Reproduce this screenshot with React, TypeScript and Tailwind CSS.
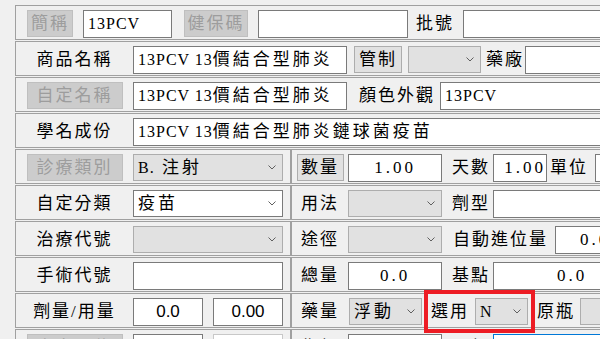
import type { ReactNode } from 'react'

// ─── Small form pieces ────────────────────────────────────────────────────────

function Chevron() {
  return (
    <svg width="8" height="5" viewBox="0 0 8 5" className="shrink-0">
      <path d="M0.5 0.5 L4 4 L7.5 0.5" fill="none" stroke="#5f5f5f" strokeWidth="1" />
    </svg>
  )
}

function Row({ children }: { children: ReactNode }) {
  return (
    <div className="flex items-center h-[35px] mb-px pt-[2px] border border-[#a0a0a0]">
      {children}
    </div>
  )
}

function Label({ children, className = '' }: { children: ReactNode; className?: string }) {
  return (
    <div className={`shrink-0 text-center text-[17px] tracking-[2px] leading-none whitespace-nowrap ${className}`}>
      {children}
    </div>
  )
}

function Btn({ children, disabled, className = '' }: { children: ReactNode; disabled?: boolean; className?: string }) {
  return (
    <div
      className={`shrink-0 h-[27px] flex items-center justify-center text-[17px] tracking-[2px] leading-none whitespace-nowrap border ${
        disabled ? 'bg-[#cccccc] border-[#bfbfbf] text-[#9d9d9d]' : 'bg-[#e1e1e1] border-[#adadad] text-black'
      } ${className}`}
    >
      {children}
    </div>
  )
}

function Input({ children, className = '' }: { children?: ReactNode; className?: string }) {
  return (
    <div
      className={`shrink-0 h-[28px] flex items-center overflow-hidden whitespace-nowrap bg-white border border-[#7a7a7a] text-[17px] tracking-[3px] leading-none ${className}`}
    >
      {children}
    </div>
  )
}

function Select({ children, white, className = '' }: { children?: ReactNode; white?: boolean; className?: string }) {
  return (
    <div
      className={`shrink-0 h-[27px] flex items-center justify-between pl-[4px] pr-[6px] border text-[17px] tracking-[3px] leading-none whitespace-nowrap ${
        white ? 'bg-white border-[#7a7a7a]' : 'bg-[#e1e1e1] border-[#adadad]'
      } ${className}`}
    >
      <span>{children}</span>
      <Chevron />
    </div>
  )
}

// latin part of a MingLiU-style string
function L({ children }: { children: ReactNode }) {
  return <span className="text-[16px] tracking-[1px]">{children}</span>
}

function Num({ children }: { children: ReactNode }) {
  return <span className="text-[17px] tracking-[3px]">{children}</span>
}

// ─── Page ─────────────────────────────────────────────────────────────────────

export default function App() {
  return (
    <div className="w-[600px] h-[339px] overflow-hidden bg-[#f0f0f0] text-black font-['Liberation_Serif','Noto_Sans_CJK_TC',serif]">
      <div className="w-[700px] pl-[15px] pt-[5px]">
        {/* 簡稱 / 健保碼 / 批號 */}
        <Row>
          <Btn disabled className="ml-[11px] w-[46px]">簡稱</Btn>
          <Input className="ml-[10px] w-[89px] pl-[4px]"><L>13PCV</L></Input>
          <Btn disabled className="ml-[12px] w-[64px]">健保碼</Btn>
          <Input className="ml-[10px] w-[150px]" />
          <Label className="ml-[8px] w-[37px]">批號</Label>
          <Input className="ml-[10px] w-[220px]" />
        </Row>

        <Row>
          <Label className="w-[117px]">商品名稱</Label>
          <Input className="w-[214px] pl-[4px]"><L>13PCV 13</L>價結合型肺炎</Input>
          <Btn className="ml-[7px] w-[48px]">管制</Btn>
          <Select className="ml-[6px] w-[73px]" />
          <Label className="ml-[5px] w-[36px]">藥廠</Label>
          <Input className="ml-[3px] w-[200px]" />
        </Row>

        <Row>
          <div className="w-[117px] shrink-0 flex justify-center">
            <Btn disabled className="w-[96px]">自定名稱</Btn>
          </div>
          <Input className="w-[214px] pl-[4px]"><L>13PCV 13</L>價結合型肺炎</Input>
          <Label className="ml-[11px] w-[78px]">顏色外觀</Label>
          <Input className="ml-[4px] w-[220px] pl-[4px]"><L>13PCV</L></Input>
        </Row>

        <Row>
          <Label className="w-[117px]">學名成份</Label>
          <Input className="w-[540px] pl-[4px]"><L>13PCV 13</L>價結合型肺炎鏈球菌疫苗</Input>
        </Row>

        <div className="flex">
          {/* left column */}
          <div className="w-[276px] shrink-0">
            <Row>
              <div className="w-[117px] shrink-0 flex justify-center">
                <Btn disabled className="w-[96px]">診療類別</Btn>
              </div>
              <Select className="w-[150px]"><L>B.</L> 注射</Select>
            </Row>
            <Row>
              <Label className="w-[117px]">自定分類</Label>
              <Select white className="w-[150px]">疫苗</Select>
            </Row>
            <Row>
              <Label className="w-[117px]">治療代號</Label>
              <Select className="w-[150px]" />
            </Row>
            <Row>
              <Label className="w-[117px]">手術代號</Label>
              <Input className="w-[150px]" />
            </Row>
            <Row>
              <Label className="w-[117px]">劑量/用量</Label>
              <Input className="w-[70px] justify-center font-['Liberation_Sans',sans-serif] text-[15px] tracking-normal">0.0</Input>
              <Input className="ml-[10px] w-[70px] justify-center font-['Liberation_Sans',sans-serif] text-[15px] tracking-normal">0.00</Input>
            </Row>
            <Row>
              <div className="w-[117px] shrink-0 flex justify-center">
                <Btn disabled className="w-[96px]">自定單位</Btn>
              </div>
              <Input className="w-[70px]" />
              <Input className="ml-[10px] w-[70px] border-[#c8c8c8]" />
            </Row>
          </div>

          {/* right column */}
          <div className="w-[400px] shrink-0">
            <Row>
              <div className="w-[56px] shrink-0 flex justify-center">
                <Btn className="w-[47px]">數量</Btn>
              </div>
              <Input className="w-[94px] justify-center"><Num>1.00</Num></Input>
              <Label className="ml-[10px] w-[38px]">天數</Label>
              <Input className="ml-[3px] w-[54px] justify-end"><Num>1.00</Num></Input>
              <Label className="ml-[3px] w-[38px]">單位</Label>
              <Input className="ml-[7px] w-[60px]" />
            </Row>
            <Row>
              <Label className="w-[56px]">用法</Label>
              <Select className="w-[94px]" />
              <Label className="ml-[10px] w-[38px]">劑型</Label>
              <Input className="ml-[3px] w-[150px]" />
            </Row>
            <Row>
              <Label className="w-[56px]">途徑</Label>
              <Select className="w-[94px]" />
              <Label className="ml-[11px] w-[95px]">自動進位量</Label>
              <Input className="ml-[7px] w-[100px] pl-[24px]"><Num>0.00</Num></Input>
            </Row>
            <Row>
              <Label className="w-[56px]">總量</Label>
              <Input className="w-[94px] justify-center"><Num>0.0</Num></Input>
              <Label className="ml-[10px] w-[38px]">基點</Label>
              <Input className="ml-[3px] w-[158px] justify-center"><Num>0.0</Num></Input>
            </Row>
            <Row>
              <Label className="w-[56px]">藥量</Label>
              <Select className="ml-px w-[73px]">浮動</Select>
              <div className="relative z-10 ml-[2px] w-[111px] h-[43px] shrink-0 flex items-center border-[4px] border-[#ed1c24]">
                <Label className="ml-[3px] w-[34px]">選用</Label>
                <Select className="ml-[10px] w-[53px]"><L>N</L></Select>
              </div>
              <Label className="ml-[2px] w-[36px]">原瓶</Label>
              <div className="ml-[7px] w-[40px] h-[27px] shrink-0 bg-[#e1e1e1] border border-[#adadad]" />
            </Row>
            <Row>
              <Label className="w-[56px]">售價</Label>
              <Input className="w-[94px] justify-center"><Num>100.00</Num></Input>
              <Label className="ml-[10px] w-[38px]">單價</Label>
              <Input className="ml-[3px] w-[158px] justify-center border-[#0078d7]"><Num>0</Num></Input>
            </Row>
          </div>
        </div>
      </div>
    </div>
  )
}
